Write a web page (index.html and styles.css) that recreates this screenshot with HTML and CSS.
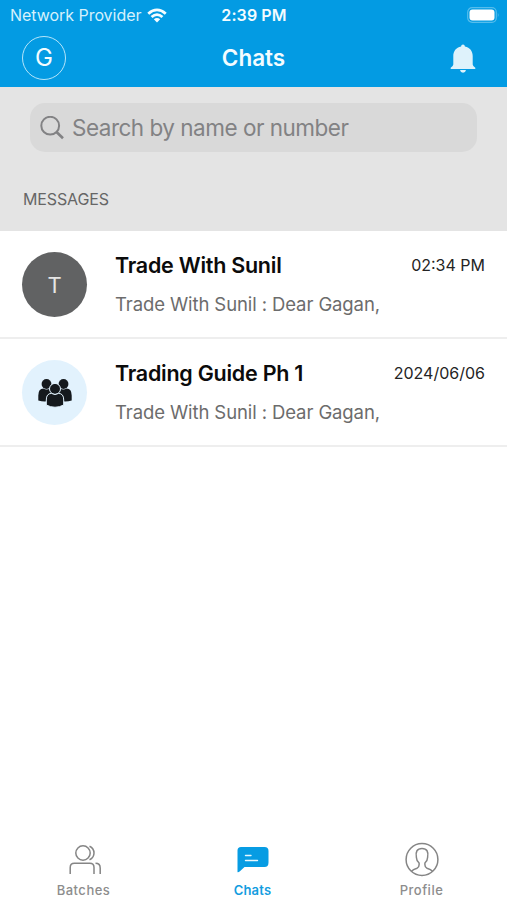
FILE: index.html
```html
<!DOCTYPE html>
<html lang="en">
<head>
<meta charset="utf-8">
<title>Chats</title>
<link rel="stylesheet" href="styles.css">
</head>
<body>
<div class="app">
  <header class="header">
    <div class="status">
      <div class="carrier"><span>Network Provider</span>
        <svg class="wifi" width="20" height="15" viewBox="0 0 20 15" fill="#f4fcff"><path d="M0.3 4.7Q10-3.7 19.7 4.7L17.8 6.7Q10 0 2.2 6.7Z"/><path d="M3.6 8Q10 2.5 16.4 8L14.5 10Q10 6.2 5.5 10Z"/><path d="M6.8 11.2Q10 8.7 13.2 11.2L10 14.5Z"/></svg>
      </div>
      <span class="clock">2:39 PM</span>
      <svg class="battery" width="33" height="16" viewBox="0 0 33 16"><rect x=".7" y=".7" width="28.6" height="14.6" rx="4.5" fill="none" stroke="#55bdec" stroke-width="1.2"/><rect x="2.5" y="2.5" width="25" height="11" rx="3" fill="#fff"/><path d="M30.8 5.5Q32.5 8 30.8 10.5Z" fill="#55bdec"/></svg>
    </div>
    <div class="nav">
      <div class="me">G</div>
      <h1 class="title">Chats</h1>
      <svg class="bell" width="26" height="29" viewBox="0 0 26 29" fill="#def2fb"><path d="M13 .5C11.900 .5 11.200 1.300 11.100 2.500C6 3.500 3.300 7.200 3.300 12V20.500Q3.300 22 .7 23.700V25H25.300V23.700Q22.700 22 22.700 20.500V12C22.700 7.200 20 3.500 14.900 2.500C14.800 1.300 14.100 .5 13 .5Z"/><path d="M10 26H16Q15.500 28.700 13 28.700T10 26Z"/></svg>
    </div>
  </header>
  <section class="top">
    <div class="search">
      <svg width="24" height="24" viewBox="0 0 24 24" fill="none" stroke="#828284"><circle cx="10.200" cy="9.700" r="8.900" stroke-width="2"/><path d="M16.500 16L23 22.300" stroke-width="2.600"/></svg>
      <span class="placeholder">Search by name or number</span>
    </div>
    <h2 class="label"><span>MESSAGES</span></h2>
  </section>
  <main class="list">
    <article class="row">
      <div class="avatar dark">T</div>
      <div class="body">
        <div class="line"><h3 class="name">Trade With Sunil</h3><time class="time t1">02:34 PM</time></div>
        <p class="preview">Trade With Sunil : Dear Gagan,</p>
      </div>
    </article>
    <article class="row">
      <div class="avatar light">
        <svg width="36" height="30" viewBox="0 0 36 30" fill="#15191d" stroke="#e2f2fd"><g stroke="none"><circle cx="9.500" cy="6" r="4.900"/><circle cx="26.500" cy="6" r="4.900"/><path d="M1.300 22.500V17.500Q1.300 10.500 6.500 10.500Q9.500 12.500 13 10.500L17 16V21.500Q9 25 1.300 22.500Z"/><path d="M34.700 22.500V17.500Q34.700 10.500 29.500 10.500Q26.500 12.500 23 10.500L19 16V21.500Q27 25 34.700 22.500Z"/></g><circle cx="18" cy="10.900" r="5.500" stroke-width="1"/><path d="M9.300 27V22Q9.300 15.500 14.400 15.400Q18 17.700 21.600 15.400Q26.700 15.500 26.700 22V27Q18 31.500 9.300 27Z" stroke-width="1"/></svg>
      </div>
      <div class="body">
        <div class="line"><h3 class="name n2">Trading Guide Ph 1</h3><time class="time t2">2024/06/06</time></div>
        <p class="preview">Trade With Sunil : Dear Gagan,</p>
      </div>
    </article>
  </main>
  <nav class="tabs">
    <div class="tab">
      <svg width="34" height="36" viewBox="0 0 34 36" fill="none" stroke="#858585" stroke-width="1.500"><circle cx="15" cy="11" r="7.200"/><path d="M21.500 4.200Q26 6.300 26 11T21.500 17.800"/><path d="M2.200 32V25.500Q2.200 21.300 6.400 21.300H21.800Q26 21.300 26 25.500V32M27.500 21.300Q32.200 21.300 32.200 26V32"/></svg>
      <span class="b">Batches</span>
    </div>
    <div class="tab on">
      <svg width="34" height="36" viewBox="0 0 34 36"><path d="M1.500 30V8.500Q1.500 5 5 5H28.500Q32.500 5 32.500 9V20.500Q32.500 25 28.500 25H8.500L4.200 29Q2.100 30.700 1.500 30Z" fill="#079ce3"/><path d="M9.500 13.500H15M9.500 18.500H21.500" stroke="#e8f8ff" stroke-width="1.400" stroke-linecap="round"/></svg>
      <span class="c">Chats</span>
    </div>
    <div class="tab">
      <svg width="34" height="36" viewBox="0 0 34 36" fill="none" stroke="#858585" stroke-width="1.500"><circle cx="17" cy="17.500" r="15.900"/><path d="M6.500 29.300Q8 27.600 12 26.300Q14.100 25.500 14.100 22.800V21Q11.500 19 11.400 15.500Q9.700 6.500 17 6.500T22.600 15.500Q22.500 19 19.900 21V22.800Q19.900 25.500 22 26.300Q26 27.600 27.500 29.300"/></svg>
      <span class="p">Profile</span>
    </div>
  </nav>
</div>
</body>
</html>
```
FILE: styles.css
```css
* { box-sizing: border-box; margin: 0; padding: 0; }
body { font-family: Inter, "Liberation Sans", sans-serif; background: #fff; }
svg { display: block; flex: none; }
.app { width: 507px; height: 900px; display: flex; flex-direction: column; overflow: hidden; white-space: nowrap; }
.header { height: 87px; background: #039be3; color: #f3fcff; }
.status { height: 29px; display: grid; grid-template-columns: 1fr auto 1fr; align-items: center; padding: 0 9px 0 10px; }
.carrier { display: flex; align-items: center; gap: 6px; font-size: 16px; line-height: 30px; letter-spacing: -.04px; color: #d5f1fc; }
.clock { font-size: 16px; font-weight: 600; line-height: 30px; letter-spacing: .1px; }
.battery { justify-self: end; margin-right: -2px; }
.nav { height: 58px; display: grid; grid-template-columns: 1fr auto 1fr; align-items: center; padding: 0 22px; }
.me { width: 44px; height: 44px; border: 1.5px solid #b5e5fa; border-radius: 50%; font-size: 24px; line-height: 42px; text-align: center; }
.title { font-size: 22.5px; font-weight: 600; line-height: 58px; }
.bell { justify-self: end; margin-right: 9px; }
.top { height: 144px; background: #e4e4e4; padding: 16px 30px 0 30px; }
.search { height: 49px; border-radius: 15px; background: #d9d9d9; display: flex; align-items: center; padding-left: 10px; gap: 8px; }
.placeholder { font-size: 22.5px; line-height: 49px; letter-spacing: -.5px; color: #828284; }
.label { font-size: 16px; font-weight: 400; line-height: 24px; letter-spacing: -.12px; color: #666; margin: 35px 0 0 -7px; }
.row { height: 108px; display: flex; padding: 21px 22px 0; border-bottom: 2px solid #eee; }
.avatar { width: 65px; height: 65px; border-radius: 50%; display: flex; align-items: center; justify-content: center; flex: none; }
.dark { background: #616263; color: #e5e5e5; font-size: 22px; }
.light { background: #e2f2fd; }
.body { flex: 1; margin-left: 28px; margin-top: -1px; }
.line { display: flex; justify-content: space-between; height: 28px; line-height: 28px; }
.name { font-size: 21.5px; font-weight: 600; letter-spacing: -.25px; color: #0b0b0b; }
.time { font-size: 16px; color: #242424; }
.preview { font-size: 18.5px; line-height: 26px; letter-spacing: -.1px; margin-top: 12px; color: #6c6c6c; }
.tabs { margin-top: auto; height: 58px; display: grid; grid-template-columns: repeat(3, 1fr); margin-left: -1px; margin-right: 1px; }
.tab { display: flex; flex-direction: column; align-items: center; font-size: 13px; font-weight: 500; line-height: 18px; letter-spacing: .5px; color: #8d8d8d; gap: 3px; }
.tab:first-child svg { margin-left: 2px; }
.on { color: #139de0; font-weight: 600; letter-spacing: .2px; }
```
